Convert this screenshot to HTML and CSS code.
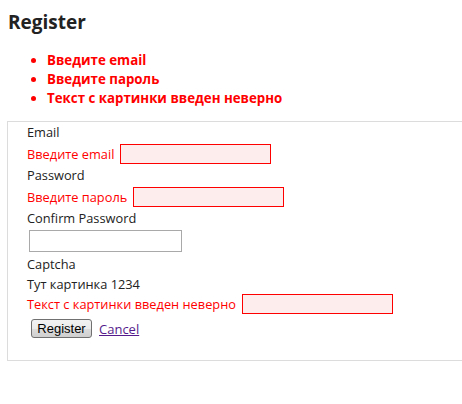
FILE: index.html
```html
<!DOCTYPE html>
<html>
<head>
<meta charset="utf-8">
<link rel="stylesheet" href="styles.css">
</head>
<body>
<h2 class="title">Register</h2>
<ul class="summary">
  <li>Введите email</li>
  <li>Введите пароль</li>
  <li>Текст с картинки введен неверно</li>
</ul>
<div class="box">
  <div class="row label">Email</div>
  <div class="row field"><span class="err">Введите email</span><span class="input bad"></span></div>
  <div class="row label">Password</div>
  <div class="row field"><span class="err">Введите пароль</span><span class="input bad"></span></div>
  <div class="row label">Confirm Password</div>
  <div class="row plain"><span class="input ok"></span></div>
  <div class="row label">Captcha</div>
  <div class="row label">Тут картинка 1234</div>
  <div class="row field cap"><span class="err">Текст с картинки введен неверно</span><span class="input bad"></span></div>
  <div class="actions"><button class="btn">Register</button><a class="cancel" href="#">Cancel</a></div>
</div>
</body>
</html>
```
FILE: styles.css
```css
html, body { margin: 0; padding: 0; overflow: hidden; background: #fff; }
body { font-family: "Open Sans", "Noto Sans", sans-serif; font-size: 13px; color: #222; width: 462px; height: 404px; }
.title { margin: 0; padding: 10px 0 0 8px; font-size: 19px; line-height: 24px; font-weight: 700; color: #222; }
.summary { margin: 17px 0 0 0; padding: 0 0 0 47px; color: #f00; font-weight: 700; font-size: 13.3px; line-height: 19px; }
.summary li { padding-left: 0; }
.box { margin: 13px 0 0 7px; border: 1px solid #dcdcdc; border-right: none; padding: 0 0 22px 19px; display: flex; flex-direction: column; font-size: 12.8px; }
.row { display: flex; align-items: center; }
.label { height: 20px; }
.field { height: 23px; }
.cap { height: 20px; }
.plain { height: 26px; }
.err { color: #f00; margin-right: 6px; }
.input { display: block; box-sizing: border-box; }
.bad { width: 151px; height: 20px; border: 1px solid #f00; background: #feeded; }
.ok { width: 153px; height: 22px; border: 1px solid #a9a9a9; background: #fff; margin-left: 2px; }
.actions { display: flex; align-items: center; margin-top: 5px; }
.btn { margin: 0 0 0 4px; width: 61px; height: 19px; padding: 0; font-family: "Liberation Sans", Arial, sans-serif; font-size: 13px; color: #000; border: 1px solid #707070; border-radius: 3px; background: linear-gradient(#f2f2f2, #ebebeb 50%, #dddddd 50%, #cfcfcf); }
.cancel { margin-left: 7px; color: #551a8b; text-decoration: underline; font-size: 13px; }
```
